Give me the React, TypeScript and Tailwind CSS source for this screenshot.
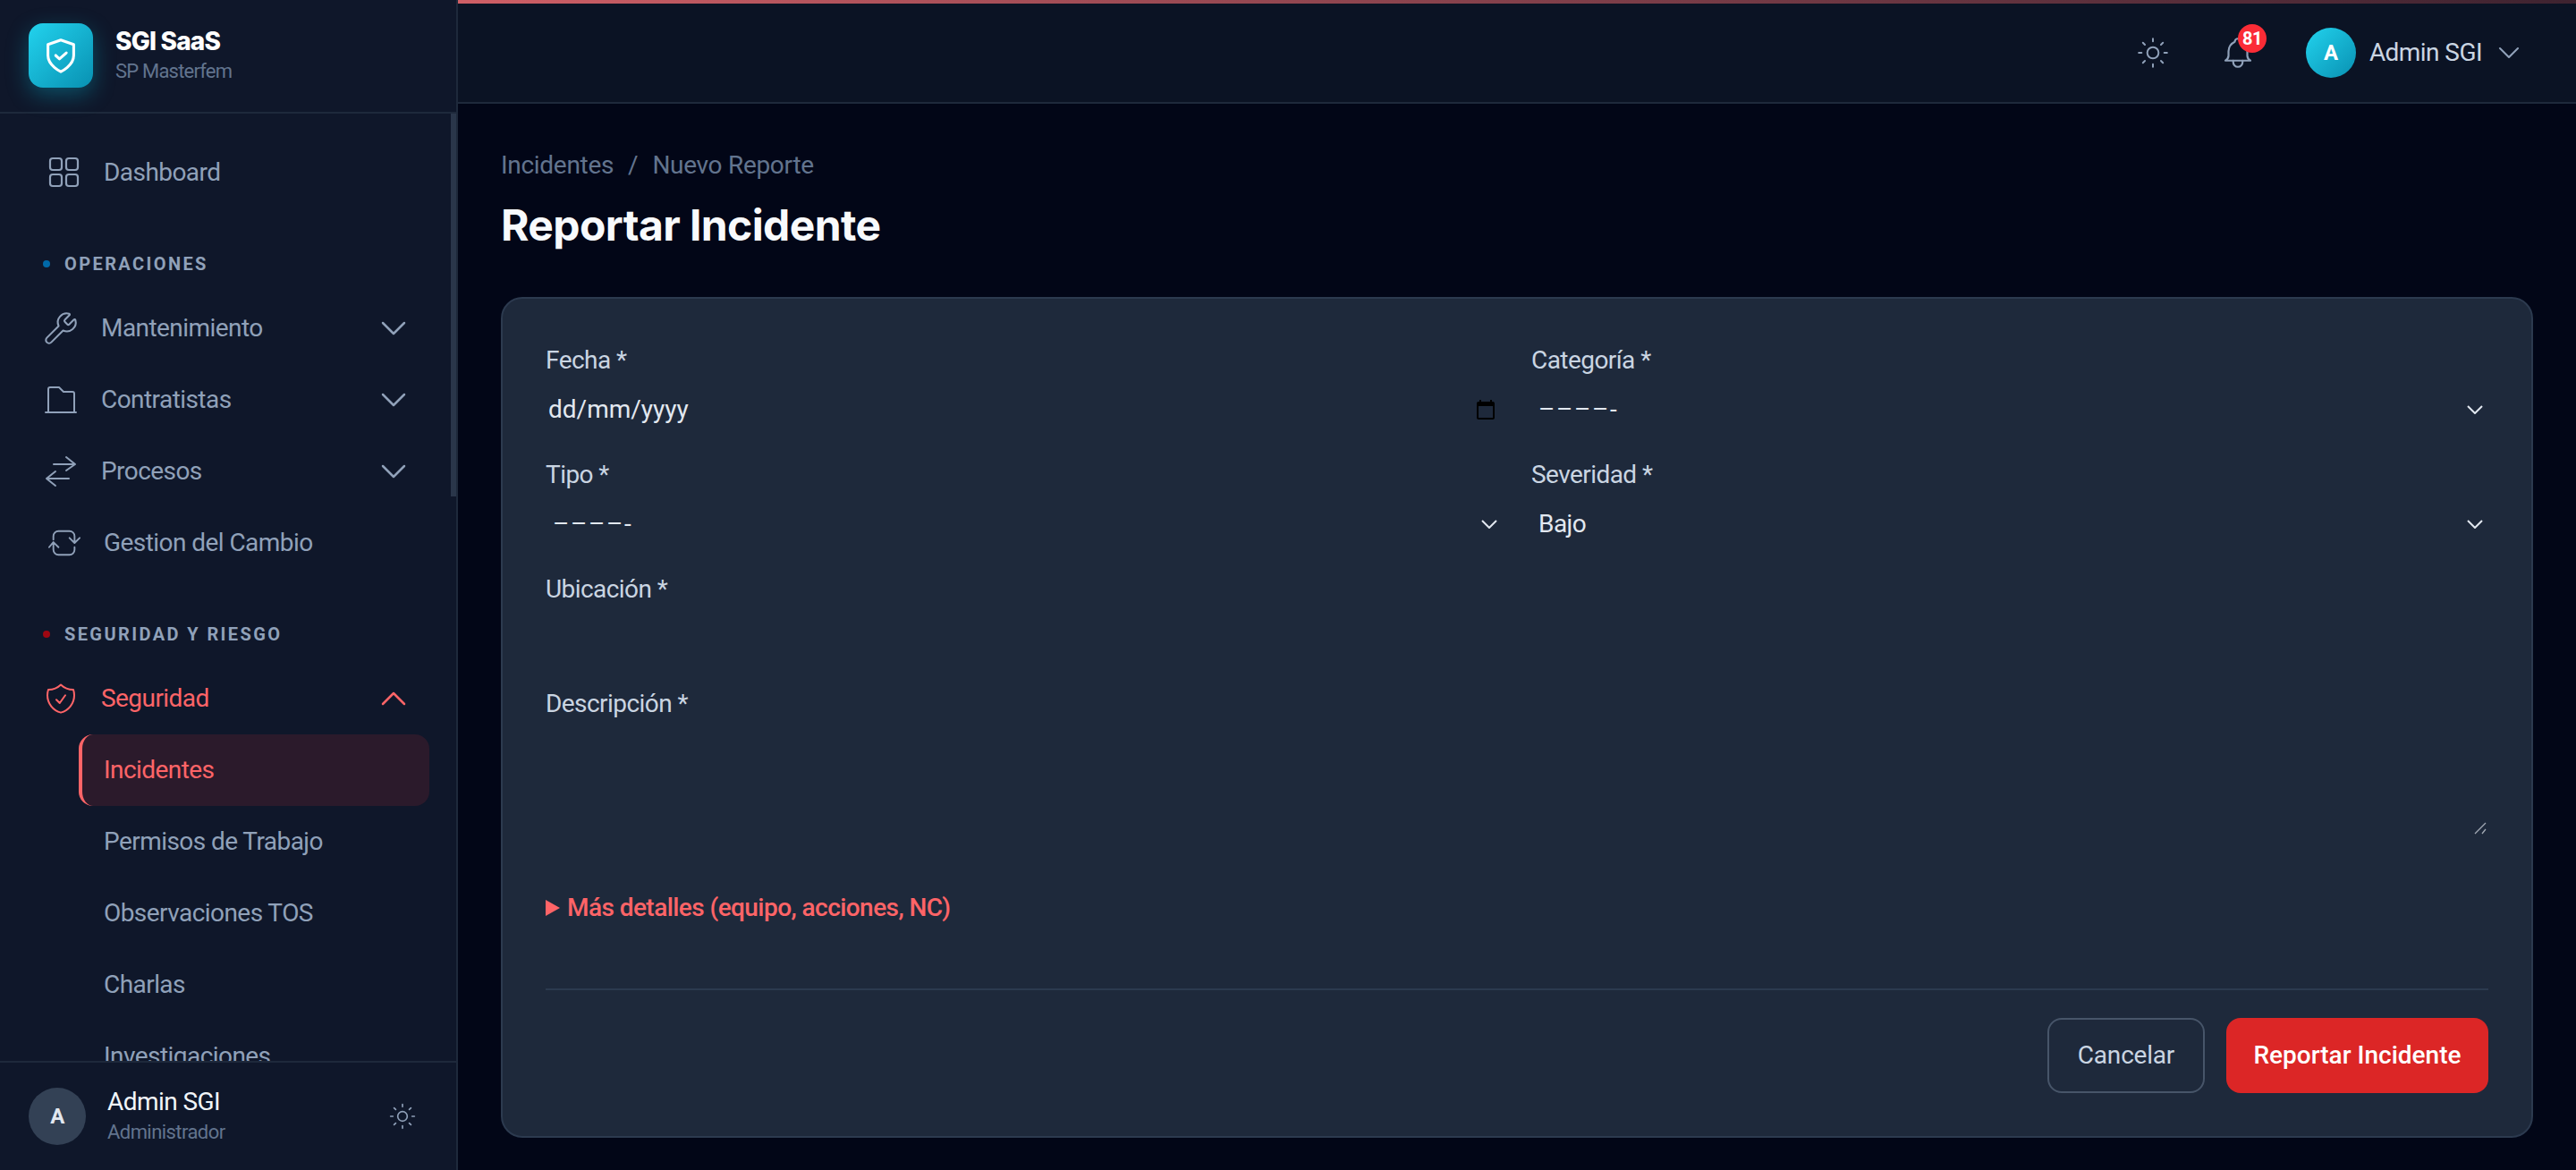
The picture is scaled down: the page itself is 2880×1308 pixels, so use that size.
import { ChevronDown, ChevronUp, Sun, Wrench } from "lucide-react";
import { TbBell } from "react-icons/tb";

const IconDashboard = () => (
    <svg className="size-[36px]" viewBox="0 0 36 36" fill="none" stroke="currentColor" strokeWidth="2.2">
        <rect x="2" y="2" width="13" height="13" rx="3" />
        <rect x="20" y="2" width="13" height="13" rx="3" />
        <rect x="2" y="20" width="13" height="13" rx="3" />
        <rect x="20" y="20" width="13" height="13" rx="3" />
    </svg>
);

const IconFolder = () => (
    <svg className="size-9" viewBox="0 0 36 36" fill="none" stroke="currentColor" strokeWidth="2" strokeLinecap="round" strokeLinejoin="round">
        <path d="M1 32h34M4 32V6a2 2 0 0 1 2-2h10l5 5h10a2 2 0 0 1 2 2v21" />
    </svg>
);

const IconExchange = () => (
    <svg className="size-9" viewBox="0 0 36 36" fill="none" stroke="currentColor" strokeWidth="2" strokeLinecap="round" strokeLinejoin="round">
        <path d="M10 10h24M24 2l10 8-10 7" />
        <path d="M27 26H2M12 18 2 26l10 8" />
    </svg>
);

const IconCycle = () => (
    <svg className="size-9" viewBox="0 0 38 32" fill="none" stroke="currentColor" strokeWidth="2" strokeLinecap="round" strokeLinejoin="round">
        <path d="M6 12V8a6 6 0 0 1 6-6h13a6 6 0 0 1 6 6v7M25 10l6 6 6-6" />
        <path d="M31 21v3a6 6 0 0 1-6 6H12a6 6 0 0 1-6-6v-8M1 21l5-6 6 6" />
    </svg>
);

const IconShieldCheck = () => (
    <svg className="size-[42px]" viewBox="0 0 24 24" fill="none" stroke="currentColor" strokeWidth="1.2" strokeLinecap="round" strokeLinejoin="round">
        <path d="M9 12.75 11.25 15 15 9.75m-3-7.036A11.959 11.959 0 0 1 3.598 6 11.99 11.99 0 0 0 3 9.749c0 5.592 3.824 10.29 9 11.623 5.176-1.332 9-6.03 9-11.622 0-1.31-.21-2.571-.598-3.751h-.152c-3.196 0-6.1-1.248-8.25-3.286Z" />
    </svg>
);

const Section = ({ dot, label }: { dot: string; label: string }) => (
    <div className="flex h-[94px] shrink-0 items-center gap-4 pl-12 pt-[30px]">
        <span className={`size-2 rounded-full ${dot}`} />
        <span className="text-[20px] font-bold tracking-[0.12em] text-slate-400">{label}</span>
    </div>
);

const NavParent = ({ icon, label, open, active }: { icon: React.ReactNode; label: string; open?: boolean; active?: boolean }) => (
    <div className={`flex h-20 shrink-0 items-center pl-[48px] pr-[46px] text-[28px] ${active ? "text-red-400" : "text-slate-400"}`}>
        <span className="flex w-10 justify-center">{icon}</span>
        <span className="ml-[25px] flex-1">{label}</span>
        {open ? <ChevronUp size={48} strokeWidth={1.25} /> : <ChevronDown size={48} strokeWidth={1.25} />}
    </div>
);

const SubItem = ({ label, active }: { label: string; active?: boolean }) => (
    <div
        className={`ml-[88px] flex h-20 w-[392px] shrink-0 items-center rounded-2xl border-l-4 pl-6 text-[28px] ${
            active ? "border-red-400 bg-[#2b1a2b] text-red-400" : "border-transparent text-slate-400"
        }`}
    >
        {label}
    </div>
);

const Field = ({ label, children, wide }: { label: string; children: React.ReactNode; wide?: boolean }) => (
    <div className={wide ? "col-span-2" : ""}>
        <label className="block h-[42px] text-[28px] leading-[42px] text-slate-300">{label}</label>
        {children}
    </div>
);

const SelectBox = ({ value, spaced }: { value: string; spaced?: boolean }) => (
    <div className="relative h-[68px]">
        <select
            className={`h-full w-full appearance-none bg-transparent pl-2 text-[28px] text-slate-200 outline-none ${spaced ? "tracking-[1.6px]" : ""}`}
            defaultValue={value}
        >
            <option value={value}>{value}</option>
        </select>
        <svg className="absolute right-[6px] top-[29px] h-[10px] w-[18px]" viewBox="0 0 18 10" fill="none" stroke="#e2e8f0" strokeWidth="2">
            <path d="M1 1l8 8 8-8" />
        </svg>
    </div>
);

const App = () => {
    return (
        <div className="flex h-[1308px] w-[2880px] overflow-hidden bg-[#020617] font-['Roboto',sans-serif] tracking-[-0.56px]">
            {/* Sidebar */}
            <aside className="flex w-[512px] shrink-0 flex-col border-r-2 border-[#1e293b] bg-[#0f172a]">
                <div className="flex h-[127px] shrink-0 items-center gap-[25px] border-b-2 border-[#1e293b] pb-[2px] pl-8">
                    <div className="flex size-[72px] items-center justify-center rounded-2xl bg-gradient-to-br from-[#22d3ee] to-[#0891b2] shadow-[0_8px_24px_rgba(6,182,212,0.35)]">
                        <svg className="size-[46px]" viewBox="0 0 24 24" fill="none" stroke="white" strokeWidth="1.6" strokeLinecap="round" strokeLinejoin="round">
                            <path d="M12 21.5s7.5-3.6 7.5-9.5V5.6L12 3 4.5 5.6V12c0 5.900 7.500 9.500 7.500 9.500z" />
                            <path d="m9 12 2.200 2 4-3.500" />
                        </svg>
                    </div>
                    <div>
                        <div className="text-[28px] font-extrabold leading-9 tracking-[-0.8px] text-white font-['Inter',sans-serif]">SGI SaaS</div>
                        <div className="text-[22px] leading-8 tracking-[-0.8px] text-slate-500">SP Masterfem</div>
                    </div>
                </div>

                <div className="relative min-h-0 flex-1 overflow-hidden">
                    <div className="absolute right-0 top-0 h-[428px] w-[6px] bg-[#2a364a]" />
                    <nav className="flex flex-col pt-[26px]">
                        <div className="flex h-20 shrink-0 items-center pl-[54px] text-[28px] text-slate-400">
                            <IconDashboard />
                            <span className="ml-[26px]">Dashboard</span>
                        </div>
                        <Section dot="bg-sky-700" label="OPERACIONES" />
                        <NavParent icon={<Wrench size={40} strokeWidth={1.25} />} label="Mantenimiento" />
                        <NavParent icon={<IconFolder />} label="Contratistas" />
                        <NavParent icon={<IconExchange />} label="Procesos" />
                        <div className="flex h-20 shrink-0 items-center pl-[54px] text-[28px] text-slate-400">
                            <IconCycle />
                            <span className="ml-[26px]">Gestion del Cambio</span>
                        </div>
                        <Section dot="bg-red-800" label="SEGURIDAD Y RIESGO" />
                        <NavParent icon={<IconShieldCheck />} label="Seguridad" open active />
                        <SubItem label="Incidentes" active />
                        <SubItem label="Permisos de Trabajo" />
                        <SubItem label="Observaciones TOS" />
                        <SubItem label="Charlas" />
                        <SubItem label="Investigaciones" />
                    </nav>
                </div>

                <div className="flex h-[122px] shrink-0 items-center border-t-2 border-[#1e293b] pl-8 pr-[44px]">
                    <div className="flex size-16 items-center justify-center rounded-full bg-[#334155] text-[24px] font-bold text-slate-200">A</div>
                    <div className="ml-[24px] flex-1">
                        <div className="text-[28px] leading-9 text-slate-100">Admin SGI</div>
                        <div className="text-[22px] leading-8 text-slate-500">Administrador</div>
                    </div>
                    <Sun className="text-slate-400" size={32} strokeWidth={1.25} />
                </div>
            </aside>

            {/* Main */}
            <div className="flex min-w-0 flex-1 flex-col">
                <header className="relative flex h-[116px] shrink-0 items-center justify-end border-b-2 border-[#1e293b] bg-[#0b1324] pr-[55px] pt-1">
                    <div className="absolute inset-x-0 top-0 h-1 bg-gradient-to-r from-[#cf5f66] to-[#3f2330]" />
                    <Sun className="text-slate-400" size={38} strokeWidth={1.25} />
                    <div className="relative ml-[55px] text-[42px] text-slate-400">
                        <TbBell strokeWidth={1.25} />
                        <span className="absolute -right-[11px] -top-[11px] flex size-8 items-center justify-center rounded-full bg-red-500 text-[20px] font-bold text-white">81</span>
                    </div>
                    <div className="ml-[55px] flex size-14 items-center justify-center rounded-full bg-gradient-to-br from-[#22d3ee] to-[#0891b2] text-[24px] font-bold text-white">A</div>
                    <span className="ml-[15px] text-[28px] text-slate-300">Admin SGI</span>
                    <ChevronDown className="ml-[10px] text-slate-400" size={40} strokeWidth={1.25} />
                </header>

                <main className="flex-1 px-12 pt-[46px]">
                    <div className="flex h-[46px] items-center text-[28px] tracking-[-0.3px] text-slate-500">
                        <span>Incidentes</span>
                        <span className="mx-4">/</span>
                        <span>Nuevo Reporte</span>
                    </div>
                    <h1 className="mt-2 h-[72px] text-[48px] font-bold leading-[72px] tracking-[-0.6px] text-slate-50 font-['Inter',sans-serif]">Reportar Incidente</h1>

                    <div className="mt-[44px] rounded-3xl border-2 border-[#2c3a4f] bg-[#1e293b] px-12 pb-[48px] pt-12">
                        <form className="grid grid-cols-2 gap-x-8 gap-y-[18px]">
                            <Field label="Fecha *">
                                <div className="flex h-[68px] items-center justify-between pl-[3px] pr-[7px] text-[28px] text-slate-200">
                                    <span className="tracking-normal">dd/mm/yyyy</span>
                                    <svg className="size-6" viewBox="0 0 24 24" fill="black">
                                        <path d="M20 3h-1V1h-2v2H7V1H5v2H4c-1.100 0-2 .9-2 2v16c0 1.100.9 2 2 2h16c1.100 0 2-.9 2-2V5c0-1.100-.9-2-2-2zm0 18H4V8h16v13z" />
                                    </svg>
                                </div>
                            </Field>
                            <Field label="Categoría *"><SelectBox value="––––-" spaced /></Field>
                            <Field label="Tipo *"><SelectBox value="––––-" spaced /></Field>
                            <Field label="Severidad *"><SelectBox value="Bajo" /></Field>
                            <Field label="Ubicación *" wide>
                                <input className="h-[68px] w-full bg-transparent px-2 text-[28px] text-slate-200 outline-none" />
                            </Field>
                            <Field label="Descripción *" wide>
                                <div className="relative h-[129px]">
                                    <textarea className="block h-full w-full resize-none bg-transparent px-2 text-[28px] text-slate-200 outline-none" />
                                    <svg className="absolute bottom-1 right-[2px] size-[14px]" viewBox="0 0 14 14" fill="none" stroke="#a3aab5" strokeWidth="1.300">
                                        <path d="M1 13 13 1M9 13l4-5" />
                                    </svg>
                                </div>
                            </Field>
                        </form>

                        <details className="mt-[57px] h-[42px] text-[28px] font-medium leading-[42px] text-red-400">
                            <summary className="flex list-none items-center gap-2">
                                <svg className="h-[18px] w-4" viewBox="0 0 16 18" fill="currentColor"><path d="M0 0l16 9-16 9z" /></svg>
                                Más detalles (equipo, acciones, NC)
                            </summary>
                        </details>

                        <div className="mt-[69px] flex justify-end gap-6 border-t-2 border-[#2c3a4f] pt-[31px]">
                            <button type="button" className="h-[84px] w-[176px] rounded-2xl border-2 border-[#475569] text-[28px] tracking-[-0.2px] text-slate-300">Cancelar</button>
                            <button type="button" className="h-[84px] w-[293px] rounded-2xl bg-[#dc2626] text-[28px] font-medium tracking-normal text-white">Reportar Incidente</button>
                        </div>
                    </div>
                </main>
            </div>
        </div>
    );
};

export default App;
